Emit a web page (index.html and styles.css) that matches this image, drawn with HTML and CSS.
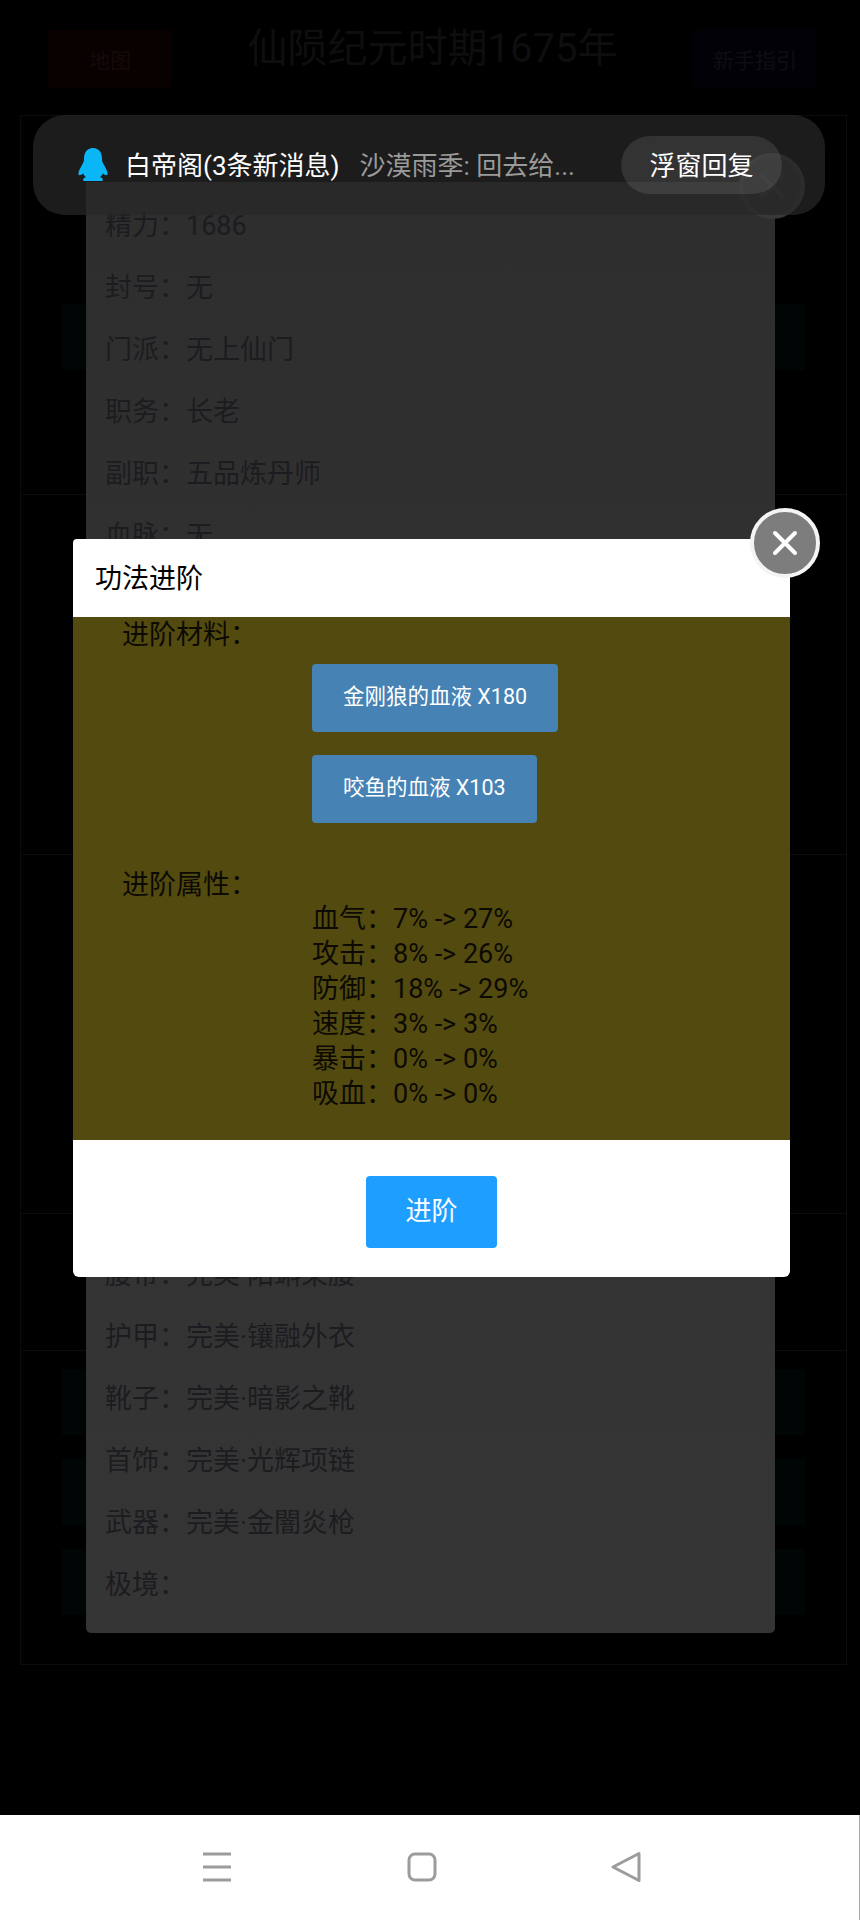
FILE: index.html
```html
<!DOCTYPE html>
<html lang="zh-CN">
<head>
<meta charset="utf-8">
<title>功法进阶</title>
<link rel="stylesheet" href="styles.css">
</head>
<body>
<div class="screen">
  <main class="page">
    <header class="top">
      <div class="top-btn top-btn-red">地图</div>
      <h1 class="top-title">仙陨纪元时期1675年</h1>
      <div class="top-btn top-btn-navy">新手指引</div>
    </header>
    <section class="panel panel-a"><div class="strip"></div></section>
    <section class="panel panel-b"></section>
    <section class="panel panel-c"></section>
    <section class="panel panel-d"></section>
    <section class="panel panel-e">
      <div class="strip"></div>
      <div class="strip"></div>
      <div class="strip"></div>
    </section>
  </main>

  <nav class="nav">
    <svg class="nav-icon" width="32" height="32" viewBox="0 0 32 32"><path d="M2 3h28M2 16h28M2 29h28" fill="none" stroke="#9c9c9c" stroke-width="3"/></svg>
    <svg class="nav-icon" width="32" height="32" viewBox="0 0 32 32"><rect x="3" y="3" width="26" height="26" rx="6" fill="none" stroke="#9c9c9c" stroke-width="3"/></svg>
    <svg class="nav-icon" width="32" height="32" viewBox="0 0 32 32"><path d="M29 2.500L3 16l26 13.500z" fill="none" stroke="#9c9c9c" stroke-width="3" stroke-linejoin="round"/></svg>
  </nav>

  <div class="sheet">
    <ul class="sheet-list">
      <li class="sheet-row">精力&#xFF1A;1686</li>
      <li class="sheet-row">封号&#xFF1A;无</li>
      <li class="sheet-row">门派&#xFF1A;无上仙门</li>
      <li class="sheet-row">职务&#xFF1A;长老</li>
      <li class="sheet-row">副职&#xFF1A;五品炼丹师</li>
      <li class="sheet-row">血脉&#xFF1A;无</li>
    </ul>
    <ul class="sheet-list">
      <li class="sheet-row">腰带&#xFF1A;完美·阳蝌束腰</li>
      <li class="sheet-row">护甲&#xFF1A;完美·镶融外衣</li>
      <li class="sheet-row">靴子&#xFF1A;完美·暗影之靴</li>
      <li class="sheet-row">首饰&#xFF1A;完美·光辉项链</li>
      <li class="sheet-row">武器&#xFF1A;完美·金闇炎枪</li>
      <li class="sheet-row">极境&#xFF1A;</li>
    </ul>
  </div>
  <div class="close close-back">
    <svg width="26" height="26" viewBox="0 0 26 26"><path d="M3 3l20 20M23 3L3 23" stroke="#3a3a3a" stroke-width="4" stroke-linecap="round"/></svg>
  </div>

  <div class="modal">
    <div class="modal-title">功法进阶</div>
    <div class="modal-body">
      <div class="label">进阶材料&#xFF1A;</div>
      <div class="materials">
        <div class="material">金刚狼的血液 X180</div>
        <div class="material">咬鱼的血液 X103</div>
      </div>
      <div class="label">进阶属性&#xFF1A;</div>
      <ul class="stats">
        <li>血气&#xFF1A;7% -&gt; 27%</li>
        <li>攻击&#xFF1A;8% -&gt; 26%</li>
        <li>防御&#xFF1A;18% -&gt; 29%</li>
        <li>速度&#xFF1A;3% -&gt; 3%</li>
        <li>暴击&#xFF1A;0% -&gt; 0%</li>
        <li>吸血&#xFF1A;0% -&gt; 0%</li>
      </ul>
    </div>
    <div class="modal-foot">
      <div class="primary">进阶</div>
    </div>
  </div>
  <div class="close close-front">
    <svg width="26" height="26" viewBox="0 0 26 26"><path d="M3 3l20 20M23 3L3 23" stroke="#fff" stroke-width="4" stroke-linecap="round"/></svg>
  </div>

  <aside class="notice">
    <svg class="penguin" width="30" height="33" viewBox="0 0 30 33"><path d="M15 0C8.500 0 6 5 6 11c0 2-.5 3.500-2 6-2 3.500-4 7.500-3.500 9.500.5 1.500 3 .5 4.500-1 .5 1 1.500 2.500 3 3.500-1.500.6-3 1.500-3 3 0 1 1.500 1 4 1h12c2.500 0 4 0 4-1 0-1.500-1.500-2.400-3-3 1.500-1 2.500-2.500 3-3.500 1.500 1.500 4 2.500 4.500 1 .5-2-1.500-6-3.500-9.500-1.500-2.500-2-4-2-6C24 5 21.500 0 15 0z" fill="#0bb6f6"/></svg>
    <span class="notice-title">白帝阁(3条新消息)</span>
    <span class="notice-text">沙漠雨季: 回去给...</span>
    <span class="notice-action">浮窗回复</span>
  </aside>
</div>
</body>
</html>
```
FILE: styles.css
```css
* {
  box-sizing: border-box;
}

html,
body {
  margin: 0;
  padding: 0;
  background: #000;
}

body {
  font-family: Roboto, "Noto Sans CJK SC", sans-serif;
  font-size: 27px;
}

ul {
  list-style: none;
  margin: 0;
  padding: 0;
}

.screen {
  position: relative;
  width: 860px;
  height: 1920px;
  overflow: hidden;
  display: flex;
  flex-direction: column;
  background: #000;
}

/* dimmed page behind the dialogs */
.page {
  flex: 1;
  padding: 0 13px 0 20px;
}

.top {
  height: 115px;
  display: flex;
  justify-content: space-between;
  padding: 30px 30px 0 28px;
}

.top-btn {
  width: 124px;
  height: 58px;
  display: flex;
  align-items: center;
  justify-content: center;
  font-size: 21px;
  border-radius: 3px;
}

.top-btn-red {
  background: #090000;
  color: #150a0a;
}

.top-btn-navy {
  background: #020108;
  color: #0e0e12;
}

.top-title {
  margin: -11px 0 0;
  height: 60px;
  font-size: 40px;
  line-height: 60px;
  font-weight: 400;
  color: #0e0e0e;
}

.panel {
  border: 1px solid #0c0c0c;
  margin-bottom: -1px;
  padding: 0 41px;
}

.panel-a {
  height: 380px;
  padding-top: 188px;
}

.panel-b {
  height: 361px;
}

.panel-c {
  height: 360px;
}

.panel-d {
  height: 138px;
}

.panel-e {
  height: 315px;
  padding-top: 18px;
}

.strip {
  height: 66px;
  margin-bottom: 24px;
  background: #000506;
}

/* system navigation */
.nav {
  height: 105px;
  background: #fff;
  border-right: 1px solid #a8a8a8;
  display: flex;
  justify-content: space-between;
  padding: 36px 217px 0 201px;
}

.nav-icon {
  display: block;
}

/* grey sheet behind the dialog */
.sheet {
  position: absolute;
  left: 86px;
  top: 182px;
  width: 689px;
  height: 1451px;
  padding: 13px 19px 17px;
  display: flex;
  flex-direction: column;
  justify-content: space-between;
  background: linear-gradient(#2e2e2e, #353535);
  border-radius: 0 0 5px 5px;
}

.sheet-row {
  height: 62px;
  line-height: 62px;
  color: #1c1c20;
  white-space: nowrap;
}

.close {
  position: absolute;
  display: flex;
  align-items: center;
  justify-content: center;
  border-radius: 50%;
}

.close-back {
  left: 739px;
  top: 153px;
  width: 66px;
  height: 66px;
  background: #2e2e2e;
  border: 4px solid #383838;
}

.close-front {
  left: 750px;
  top: 508px;
  width: 70px;
  height: 70px;
  background: #7d7d7d;
  border: 4px solid #f4f4f4;
}

/* dialog */
.modal {
  position: absolute;
  left: 73px;
  top: 539px;
  width: 717px;
  border-radius: 4px 4px 6px 6px;
  overflow: hidden;
  background: #fff;
}

.modal-title {
  height: 78px;
  padding-left: 22px;
  line-height: 80px;
  color: #000;
}

.modal-body {
  height: 523px;
  padding-left: 49px;
  background: #534a10;
  color: #0c0a02;
}

.label {
  height: 35px;
  line-height: 37px;
}

.materials {
  padding: 12px 0 21px 190px;
}

.material {
  width: fit-content;
  height: 68px;
  margin-bottom: 23px;
  padding: 0 31px;
  line-height: 66px;
  font-size: 21.500px;
  color: #fff;
  background: #4682b4;
  border-radius: 4px;
}

.stats {
  padding-left: 190px;
  line-height: 35px;
}

.stats li {
  height: 35px;
}

.modal-foot {
  height: 137px;
  padding-top: 36px;
  display: flex;
  justify-content: center;
}

.primary {
  width: 131px;
  height: 72px;
  line-height: 70px;
  text-align: center;
  font-size: 26px;
  color: #fff;
  background: #1e9fff;
  border-radius: 4px;
}

/* heads-up notification */
.notice {
  position: absolute;
  left: 33px;
  top: 115px;
  width: 792px;
  height: 100px;
  border-radius: 32px;
  background: rgba(40, 40, 40, 0.7);
  display: flex;
  align-items: flex-start;
  padding: 33px 0 0 45px;
  font-size: 26px;
  white-space: nowrap;
}

.penguin {
  flex: none;
}

.notice-title {
  margin-left: 17px;
  line-height: 36px;
  color: #fff;
}

.notice-text {
  margin-left: 20px;
  width: 260px;
  line-height: 36px;
  color: #9a9a9a;
}

.notice-action {
  position: absolute;
  left: 588px;
  top: 21px;
  width: 161px;
  height: 58px;
  border-radius: 29px;
  background: rgba(255, 255, 255, 0.1);
  color: #fff;
  text-align: center;
  line-height: 60px;
}
```
